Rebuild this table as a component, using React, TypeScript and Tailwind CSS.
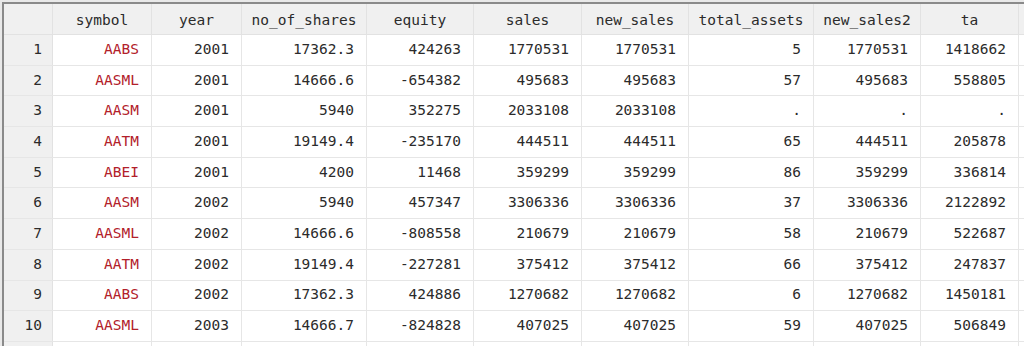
import React from 'react';

const COLS = [
  { key: 'symbol', w: 'w-[99px]' },
  { key: 'year', w: 'w-[90px]' },
  { key: 'no_of_shares', w: 'w-[125px]' },
  { key: 'equity', w: 'w-[107px]' },
  { key: 'sales', w: 'w-[108px]' },
  { key: 'new_sales', w: 'w-[107px]' },
  { key: 'total_assets', w: 'w-[125px]' },
  { key: 'new_sales2', w: 'w-[107px]' },
  { key: 'ta', w: 'w-[98px]' },
];

const ROWS: string[][] = [
  ['AABS', '2001', '17362.3', '424263', '1770531', '1770531', '5', '1770531', '1418662'],
  ['AASML', '2001', '14666.6', '-654382', '495683', '495683', '57', '495683', '558805'],
  ['AASM', '2001', '5940', '352275', '2033108', '2033108', '.', '.', '.'],
  ['AATM', '2001', '19149.4', '-235170', '444511', '444511', '65', '444511', '205878'],
  ['ABEI', '2001', '4200', '11468', '359299', '359299', '86', '359299', '336814'],
  ['AASM', '2002', '5940', '457347', '3306336', '3306336', '37', '3306336', '2122892'],
  ['AASML', '2002', '14666.6', '-808558', '210679', '210679', '58', '210679', '522687'],
  ['AATM', '2002', '19149.4', '-227281', '375412', '375412', '66', '375412', '247837'],
  ['AABS', '2002', '17362.3', '424886', '1270682', '1270682', '6', '1270682', '1450181'],
  ['AASML', '2003', '14666.7', '-824828', '407025', '407025', '59', '407025', '506849'],
  ['', '', '', '', '', '', '', '', ''],
];

export default function App() {
  return (
    <div className="w-[1024px] h-[346px] overflow-hidden bg-[#e9e9e9] pt-[2px] pl-[2px] font-['DejaVu_Sans_Mono',monospace] text-[14.5px] text-[#2b2b2b]">
      <div className="h-full border-t-2 border-l-2 border-[#8a8a8a] bg-white">
        {/* header */}
        <div className="flex h-[31px] bg-[#f0f0f0] border-b border-[#e2e2e2]">
          <div className="w-[49px] shrink-0 border-r border-[#e2e2e2]" />
          {COLS.map((c) => (
            <div
              key={c.key}
              className={`${c.w} shrink-0 border-r border-[#e2e2e2] flex items-center justify-center pt-[3px]`}
            >
              {c.key}
            </div>
          ))}
          <div className="flex-1" />
        </div>

        {/* rows */}
        {ROWS.map((r, i) => (
          <div key={i} className="flex h-[30.7px] border-b border-[#e6e6e6]">
            <div className="w-[49px] shrink-0 bg-[#f0f0f0] border-r border-[#e2e2e2] flex items-center justify-end pr-[10px]">
              {r[0] ? i + 1 : ''}
            </div>
            {COLS.map((c, j) => (
              <div
                key={c.key}
                className={`${c.w} shrink-0 border-r border-[#e6e6e6] flex items-center justify-end pr-[12px] ${j === 0 ? 'text-[#b2202a]' : ''}`}
              >
                {r[j]}
              </div>
            ))}
            <div className="flex-1" />
          </div>
        ))}
      </div>
    </div>
  );
}
